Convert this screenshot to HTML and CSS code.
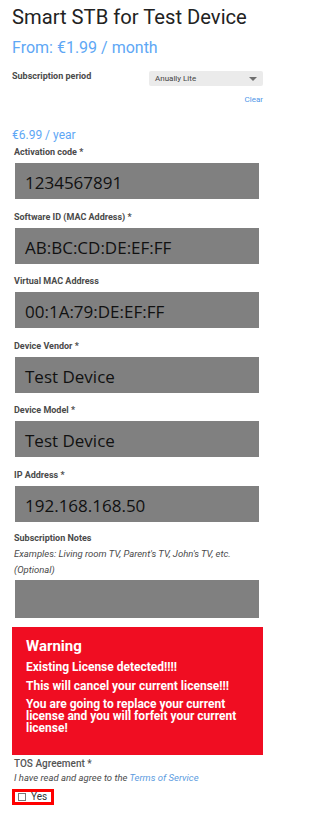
FILE: index.html
```html
<!DOCTYPE html>
<html lang="en">
<head>
<meta charset="utf-8">
<title>Smart STB for Test Device</title>
<link rel="stylesheet" href="styles.css">
</head>
<body>
<div class="page">
  <h1 class="title">Smart STB for Test Device</h1>
  <div class="price">From: €1.99 / month</div>

  <div class="period-row">
    <span class="period-label">Subscription period</span>
    <div class="select"><span>Anually Lite</span><i class="arrow"></i></div>
  </div>
  <div class="clear"><a href="#">Clear</a></div>

  <div class="yearly">€6.99 / year</div>

  <div class="fields">
    <div class="field">
      <label class="label">Activation code *</label>
      <div class="input">1234567891</div>
    </div>
    <div class="field">
      <label class="label">Software ID (MAC Address) *</label>
      <div class="input">AB:BC:CD:DE:EF:FF</div>
    </div>
    <div class="field">
      <label class="label">Virtual MAC Address</label>
      <div class="input">00:1A:79:DE:EF:FF</div>
    </div>
    <div class="field">
      <label class="label">Device Vendor *</label>
      <div class="input">Test Device</div>
    </div>
    <div class="field">
      <label class="label">Device Model *</label>
      <div class="input">Test Device</div>
    </div>
    <div class="field">
      <label class="label">IP Address *</label>
      <div class="input">192.168.168.50</div>
    </div>
  </div>

  <div class="notes">
    <label class="label notes-label">Subscription Notes</label>
    <div class="help">Examples: Living room TV, Parent's TV, John's TV, etc.</div>
    <div class="help">(Optional)</div>
    <div class="textarea"></div>
  </div>

  <div class="warning">
    <div class="warning-title">Warning</div>
    <p class="warning-line first">Existing License detected!!!!</p>
    <p class="warning-line">This will cancel your current license!!!</p>
    <p class="warning-line multi">You are going to replace your current license and you will forfeit your current license!</p>
  </div>

  <div class="tos-label">TOS Agreement *</div>
  <div class="tos-text">I have read and agree to the <a href="#">Terms of Service</a></div>
  <label class="yes"><span class="box"></span><span class="yes-text">Yes</span></label>
</div>
</body>
</html>
```

FILE: styles.css
```css
html, body {
  margin: 0;
  padding: 0;
  background: #ffffff;
}

body {
  font-family: Roboto, "Liberation Sans", sans-serif;
  color: #444;
}

.page {
  width: 251px;
  padding: 5px 0 0 12px;
}

.title {
  margin: 0;
  font-size: 20.2px;
  line-height: 24px;
  font-weight: 400;
  color: #222;
  white-space: nowrap;
}

.price {
  margin-top: 9px;
  font-size: 16px;
  line-height: 20px;
  color: #5ea7f5;
}

.period-row {
  margin-top: 13px;
  display: flex;
  justify-content: space-between;
  align-items: flex-start;
}

.period-label {
  font-size: 9px;
  line-height: 11px;
  font-weight: 700;
  color: #4a4a4a;
}

.select {
  width: 114px;
  height: 15px;
  box-sizing: border-box;
  background: #ebebeb;
  border-radius: 2px;
  display: flex;
  align-items: center;
  justify-content: space-between;
  padding: 0 6px 0 6px;
  font-size: 8px;
  line-height: 15px;
  color: #444;
}

.arrow {
  width: 0;
  height: 0;
  border-left: 4px solid transparent;
  border-right: 4px solid transparent;
  border-top: 4px solid #6f6f6f;
}

.clear {
  margin-top: 9px;
  text-align: right;
  font-size: 8px;
  line-height: 10px;
}

.clear a {
  color: #4f96e8;
  text-decoration: none;
}

.yearly {
  margin-top: 23px;
  font-size: 12px;
  line-height: 14px;
  color: #5ea7f5;
}

.fields {
  margin-top: 5px;
}

.field + .field {
  margin-top: 12.6px;
}

.label {
  display: block;
  padding-left: 2px;
  font-size: 9px;
  line-height: 11px;
  font-weight: 700;
  color: #4a4a4a;
}

.input {
  margin-top: 5px;
  margin-left: 3px;
  width: 244px;
  height: 36px;
  box-sizing: border-box;
  padding: 3px 0 0 10px;
  background: #808080;
  font-family: "Open Sans", "Liberation Sans", sans-serif;
  font-size: 17px;
  line-height: 33px;
  color: #111;
}

.notes {
  margin-top: 8px;
}

.notes-label {
  line-height: 16px;
}

.help {
  padding-left: 2px;
  font-size: 9.5px;
  line-height: 16px;
  font-style: italic;
  color: #4a4a4a;
  white-space: nowrap;
}

.textarea {
  margin-top: 2px;
  margin-left: 3px;
  width: 244px;
  height: 38px;
  background: #808080;
}

.warning {
  margin-top: 9px;
  background: #f00d22;
  color: #ffffff;
  padding: 10px 14px 20.6px 14px;
}

.warning-title {
  font-size: 15px;
  line-height: 18px;
  font-weight: 700;
}

.warning-line {
  margin: 5px 0 0 0;
  font-size: 12px;
  line-height: 14px;
  font-weight: 700;
}

.warning-line.first {
  margin-top: 5.4px;
}

.warning-line.multi {
  line-height: 12px;
}

.tos-label {
  margin-top: 2.7px;
  padding-left: 2px;
  font-size: 10px;
  line-height: 12px;
  font-weight: 500;
  color: #555;
}

.tos-text {
  margin-top: 2.6px;
  padding-left: 2px;
  font-size: 9.5px;
  line-height: 12px;
  font-style: italic;
  color: #4a4a4a;
  white-space: nowrap;
}

.tos-text a {
  color: #5b9be0;
  text-decoration: none;
}

.yes {
  margin-top: 4.7px;
  display: inline-flex;
  align-items: center;
  border: 3px solid #ff0000;
  padding: 0 4px 0 3px;
  height: 10px;
}

.box {
  width: 8px;
  height: 8px;
  box-sizing: border-box;
  border: 1px solid #777;
  background: #fff;
}

.yes-text {
  margin-left: 5px;
  font-size: 10px;
  line-height: 10px;
  color: #333;
}
```
